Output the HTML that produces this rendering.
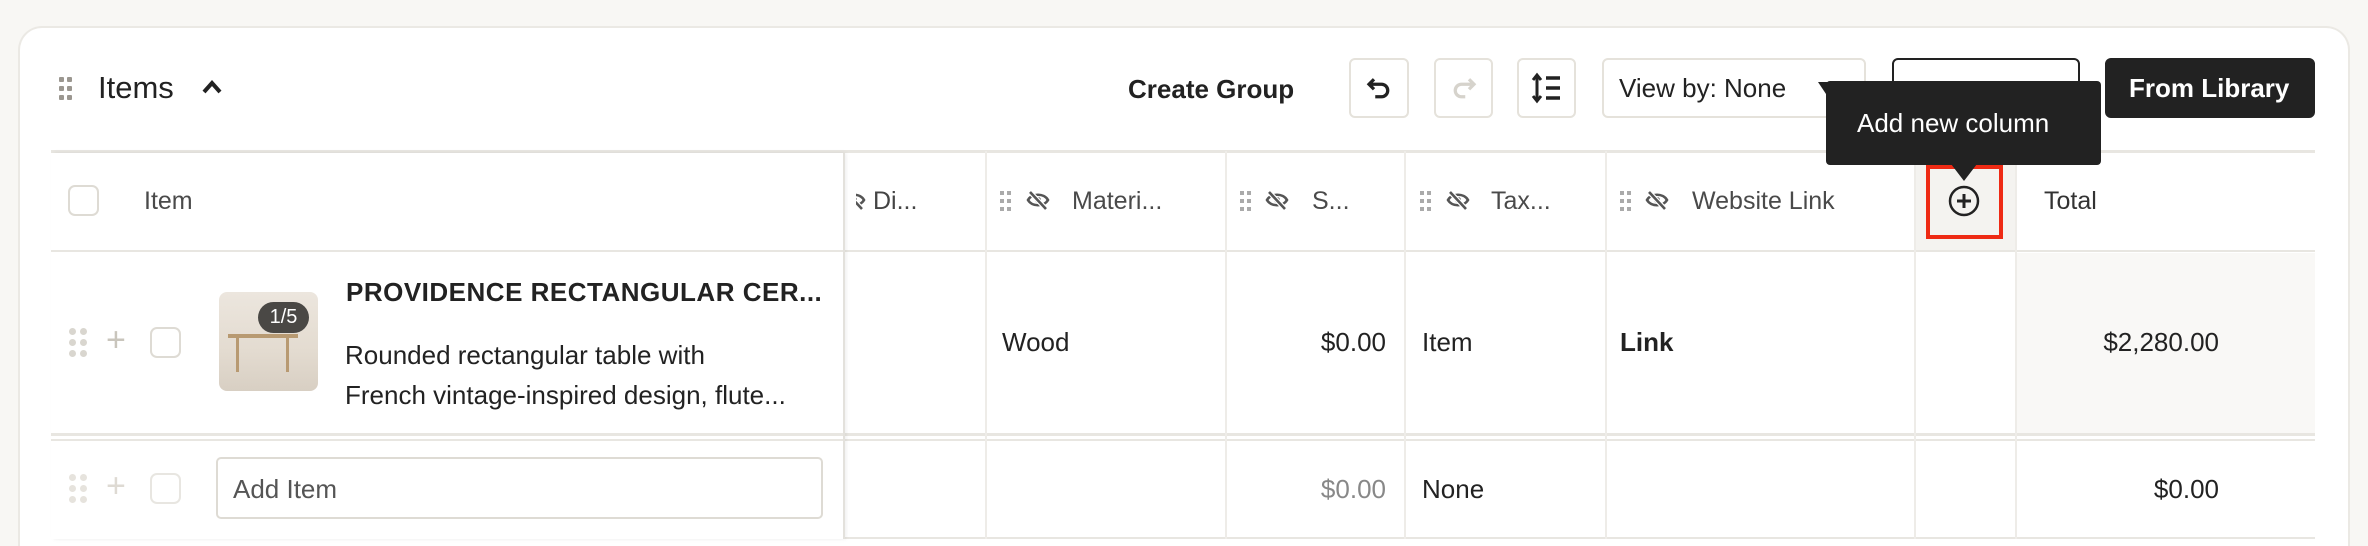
<!DOCTYPE html>
<html style="width:2368px;height:546px;overflow:hidden"><head><meta charset="utf-8"><style>
*{box-sizing:border-box;margin:0;padding:0}
body{width:2368px;height:546px;background:#f8f7f4;font-family:"Liberation Sans",sans-serif;color:#222;position:relative;overflow:hidden}
.a{position:absolute}
.card{left:18px;top:26px;width:2332px;height:520px;background:#fff;border:2px solid #ebe9e4;border-bottom:0;border-radius:24px 24px 0 0}
.btn{border:2px solid #e5e2db;border-radius:6px;background:#fff;height:60px;top:58px}
.t{font-size:26px;white-space:nowrap}
.h{font-size:25px;color:#4a4a4a;white-space:nowrap}
.hl{background:#e8e6e1;height:3px}
.vl{background:#eeece8;width:2px;top:151px;height:388px}
.cb{border:2px solid #dedbd4;border-radius:7px;width:31px;height:31px;background:#fff}
.grip{width:16px}
.grip i{position:absolute;width:5px;height:5px;background:#9b9790;border-radius:1px}
</style></head><body>
<div class="a card"></div>
<div class="a grip" style="left:59px;top:77px;height:24px">
<i style="left:0;top:0"></i><i style="left:8px;top:0"></i><i style="left:0;top:9px"></i><i style="left:8px;top:9px"></i><i style="left:0;top:18px"></i><i style="left:8px;top:18px"></i></div>
<div class="a" style="left:98px;top:70px;font-size:31px;color:#222">Items</div>
<svg class="a" style="left:200px;top:78px" width="24" height="18" viewBox="0 0 24 18"><path d="M4 14 L12 5 L20 14" fill="none" stroke="#222" stroke-width="4"/></svg>
<div class="a t" style="left:1128px;top:74px;font-weight:bold;color:#222">Create Group</div>
<div class="a btn" style="left:1349px;width:60px"></div>
<svg class="a" style="left:1364px;top:73px" width="30" height="30" viewBox="0 0 24 24"><path d="M8 5 L4 9 L8 13 M4 9 H14 a5 5 0 0 1 0 10 H9" fill="none" stroke="#222" stroke-width="2.6"/></svg>
<div class="a btn" style="left:1434px;width:59px"></div>
<svg class="a" style="left:1449px;top:73px" width="30" height="30" viewBox="0 0 24 24"><path d="M16 5 L20 9 L16 13 M20 9 H10 a5 5 0 0 0 0 10 H13" fill="none" stroke="#d6d3cc" stroke-width="2.6"/></svg>
<div class="a btn" style="left:1517px;width:59px"></div>
<svg class="a" style="left:1530px;top:71px" width="34" height="34" viewBox="0 0 34 34"><path d="M7 4 V30 M3 9 L7 4 L11 9 M3 25 L7 30 L11 25" fill="none" stroke="#222" stroke-width="3"/><path d="M16 7 H30 M16 17 H30 M16 27 H30" stroke="#222" stroke-width="3.5"/></svg>
<div class="a btn" style="left:1602px;width:264px"></div>
<div class="a t" style="left:1619px;top:73px">View by: None</div>
<svg class="a" style="left:1816px;top:80px" width="20" height="16"><path d="M2 2 L18 2 L10 14Z" fill="#222"/></svg>
<div class="a btn" style="left:1892px;width:188px;border-color:#222"></div>
<div class="a btn" style="left:2105px;width:210px;background:#222;border-color:#222"></div>
<div class="a t" style="left:2129px;top:73px;color:#fff;font-weight:bold">From Library</div>
<div class="a" style="left:1915px;top:153px;width:100px;height:98px;background:#f4f3f0"></div>
<div class="a" style="left:2015px;top:253px;width:300px;height:181px;background:#f9f8f6"></div>
<div class="a hl" style="left:51px;top:150px;width:2264px"></div>
<div class="a hl" style="left:51px;top:250px;width:2264px;height:2px"></div>
<div class="a hl" style="left:51px;top:433px;width:2264px"></div>
<div class="a hl" style="left:51px;top:439px;width:2264px;height:2px"></div>
<div class="a hl" style="left:51px;top:537px;width:2264px;height:2px"></div>
<div class="a vl" style="left:985px"></div>
<div class="a vl" style="left:1225px"></div>
<div class="a vl" style="left:1404px"></div>
<div class="a vl" style="left:1605px"></div>
<div class="a vl" style="left:1914px"></div>
<div class="a vl" style="left:2015px"></div>
<div class="a" style="left:51px;top:153px;width:792px;height:386px;background:#fff;box-shadow:3px 0 4px rgba(0,0,0,.08)"></div>
<div class="a hl" style="left:51px;top:250px;width:792px;height:2px"></div>
<div class="a hl" style="left:51px;top:433px;width:792px"></div>
<div class="a hl" style="left:51px;top:439px;width:792px;height:2px"></div>
<div class="a" style="left:843px;top:153px;width:2px;height:386px;background:#e3e1dc"></div>
<div class="a cb" style="left:68px;top:185px"></div>
<div class="a h" style="left:144px;top:187px">Item</div>
<div class="a h" style="left:873px;top:187px;color:#444">Di...</div>
<div class="a h" style="left:1072px;top:187px">Materi...</div>
<div class="a h" style="left:1312px;top:187px">S...</div>
<div class="a h" style="left:1491px;top:187px">Tax...</div>
<div class="a h" style="left:1692px;top:187px">Website Link</div>
<div class="a h" style="left:2044px;top:187px;color:#333">Total</div>
<svg width="0" height="0" style="position:absolute"><defs>
<g id="eye"><path d="M2 11 C6 4 18 4 22 11 C18 18 6 18 2 11Z" fill="none" stroke="#555" stroke-width="2.6"/><circle cx="12" cy="11" r="3" fill="#555"/><path d="M4 3 L20 20" stroke="#fff" stroke-width="5"/><path d="M4 3 L20 20" stroke="#555" stroke-width="2.6"/></g>
<g id="gr"><rect x="0" y="0" width="4" height="4" fill="#aaa"/><rect x="7" y="0" width="4" height="4" fill="#aaa"/><rect x="0" y="8" width="4" height="4" fill="#aaa"/><rect x="7" y="8" width="4" height="4" fill="#aaa"/><rect x="0" y="16" width="4" height="4" fill="#aaa"/><rect x="7" y="16" width="4" height="4" fill="#aaa"/></g></defs></svg>
<svg class="a" style="left:1000px;top:191px" width="12" height="20"><use href="#gr"/></svg>
<svg class="a" style="left:1026px;top:189px" width="26" height="24"><use href="#eye"/></svg>
<svg class="a" style="left:1240px;top:191px" width="12" height="20"><use href="#gr"/></svg>
<svg class="a" style="left:1265px;top:189px" width="26" height="24"><use href="#eye"/></svg>
<svg class="a" style="left:1420px;top:191px" width="12" height="20"><use href="#gr"/></svg>
<svg class="a" style="left:1446px;top:189px" width="26" height="24"><use href="#eye"/></svg>
<svg class="a" style="left:1620px;top:191px" width="12" height="20"><use href="#gr"/></svg>
<svg class="a" style="left:1645px;top:189px" width="26" height="24"><use href="#eye"/></svg>
<svg class="a" style="left:856px;top:189px" width="10" height="24"><use href="#eye" x="-14"/></svg>
<div class="a" style="left:1926px;top:165px;width:77px;height:74px;border:4px solid #ee2a14"></div>
<svg class="a" style="left:1948px;top:185px" width="32" height="32" viewBox="0 0 32 32"><circle cx="16" cy="16" r="14" fill="none" stroke="#222" stroke-width="2.5"/><path d="M16 9 V23 M9 16 H23" stroke="#222" stroke-width="3"/></svg>
<div class="a" style="left:1826px;top:81px;width:275px;height:84px;background:#222;border-radius:4px"></div>
<svg class="a" style="left:1951px;top:164px" width="26" height="18"><path d="M0 0 H26 L13 17Z" fill="#222"/></svg>
<div class="a t" style="left:1857px;top:108px;color:#fff">Add new column</div>
<div class="a grip" style="left:69px;top:328px;height:30px">
<i style="left:0;top:0;width:7px;height:7px;border-radius:4px;background:#d9d6cf"></i><i style="left:11px;top:0;width:7px;height:7px;border-radius:4px;background:#d9d6cf"></i><i style="left:0;top:11px;width:7px;height:7px;border-radius:4px;background:#d9d6cf"></i><i style="left:11px;top:11px;width:7px;height:7px;border-radius:4px;background:#d9d6cf"></i><i style="left:0;top:22px;width:7px;height:7px;border-radius:4px;background:#d9d6cf"></i><i style="left:11px;top:22px;width:7px;height:7px;border-radius:4px;background:#d9d6cf"></i></div>
<div class="a" style="left:106px;top:321px;font-size:34px;color:#c9c5bc">+</div>
<div class="a cb" style="left:150px;top:327px"></div>
<div class="a" style="left:219px;top:292px;width:99px;height:99px;border-radius:8px;background:linear-gradient(180deg,#ece6de,#e3dbd0 60%,#d8cfc3)"></div>
<div class="a" style="left:228px;top:334px;width:70px;height:4px;background:#b89a72"></div>
<div class="a" style="left:236px;top:338px;width:3px;height:34px;background:#b89a72"></div>
<div class="a" style="left:286px;top:338px;width:3px;height:34px;background:#b89a72"></div>
<div class="a" style="left:258px;top:302px;width:51px;height:31px;background:#4a4845;border-radius:16px;color:#fff;font-size:20px;text-align:center;line-height:31px">1/5</div>
<div class="a" style="left:346px;top:277px;font-size:26px;font-weight:bold;letter-spacing:.5px;white-space:nowrap">PROVIDENCE RECTANGULAR CER...</div>
<div class="a t" style="left:345px;top:340px">Rounded rectangular table with</div>
<div class="a t" style="left:345px;top:380px">French vintage-inspired design, flute...</div>
<div class="a t" style="left:1002px;top:327px">Wood</div>
<div class="a t" style="left:1290px;top:327px;width:96px;text-align:right">$0.00</div>
<div class="a t" style="left:1422px;top:327px">Item</div>
<div class="a t" style="left:1620px;top:327px;font-weight:bold">Link</div>
<div class="a t" style="left:2019px;top:327px;width:200px;text-align:right">$2,280.00</div>
<div class="a grip" style="left:69px;top:474px;height:30px">
<i style="left:0;top:0;width:7px;height:7px;border-radius:4px;background:#e6e3dd"></i><i style="left:11px;top:0;width:7px;height:7px;border-radius:4px;background:#e6e3dd"></i><i style="left:0;top:11px;width:7px;height:7px;border-radius:4px;background:#e6e3dd"></i><i style="left:11px;top:11px;width:7px;height:7px;border-radius:4px;background:#e6e3dd"></i><i style="left:0;top:22px;width:7px;height:7px;border-radius:4px;background:#e6e3dd"></i><i style="left:11px;top:22px;width:7px;height:7px;border-radius:4px;background:#e6e3dd"></i></div>
<div class="a" style="left:106px;top:467px;font-size:34px;color:#dedad3">+</div>
<div class="a cb" style="left:150px;top:473px;border-color:#e8e6e1"></div>
<div class="a" style="left:216px;top:457px;width:607px;height:62px;border:2px solid #dedbd4;border-radius:5px;background:#fff"></div>
<div class="a t" style="left:233px;top:474px;color:#555">Add Item</div>
<div class="a t" style="left:1290px;top:474px;width:96px;text-align:right;color:#888">$0.00</div>
<div class="a t" style="left:1422px;top:474px">None</div>
<div class="a t" style="left:2019px;top:474px;width:200px;text-align:right">$0.00</div>
</body></html>
